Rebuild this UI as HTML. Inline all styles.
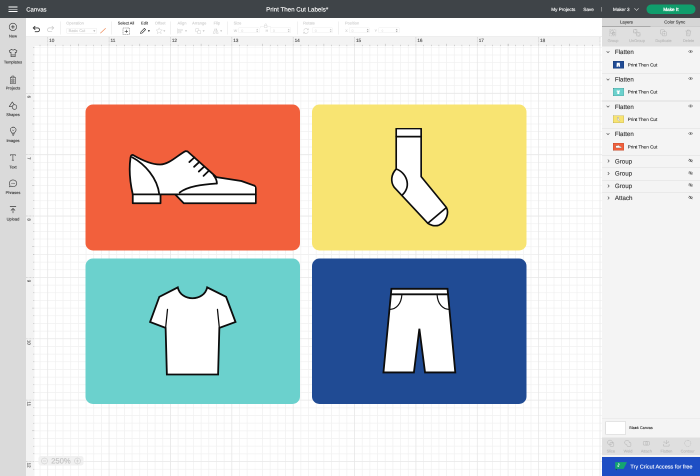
<!DOCTYPE html>
<html lang="en">
<head>
<meta charset="utf-8">
<title>Canvas - Print Then Cut Labels</title>
<style>
html,body{margin:0;padding:0;}
body{width:700px;height:476px;overflow:hidden;position:relative;background:#fff;font-family:"Liberation Sans", sans-serif;}
#app{position:absolute;left:0;top:0;width:1400px;height:952px;overflow:hidden;background:#fff;transform:scale(0.5);transform-origin:0 0;will-change:transform;}
#inner{position:absolute;left:0;top:0;width:700px;height:476px;zoom:2;}
#inner div,#inner span,#inner svg{position:absolute;display:block;}
#labels text{font-family:"Liberation Sans", sans-serif;text-rendering:geometricPrecision;white-space:pre;}
#canvas{left:26px;top:37px;width:576px;height:439px;background:#fff;}
</style>
</head>
<body>
<div id="app"><div id="inner">
<div id="canvas"></div>
<svg style="left:0;top:0" width="700" height="476" viewBox="0 0 700 476" fill="none"><path d="M40.03 46V476M55.37 46V476M63.04 46V476M70.71 46V476M78.39 46V476M86.06 46V476M93.73 46V476M101.40 46V476M116.74 46V476M124.41 46V476M132.08 46V476M139.75 46V476M147.43 46V476M155.10 46V476M162.77 46V476M178.11 46V476M185.78 46V476M193.45 46V476M201.12 46V476M208.80 46V476M216.47 46V476M224.14 46V476M239.48 46V476M247.15 46V476M254.82 46V476M262.50 46V476M270.17 46V476M277.84 46V476M285.51 46V476M300.85 46V476M308.52 46V476M316.19 46V476M323.86 46V476M331.54 46V476M339.21 46V476M346.88 46V476M362.22 46V476M369.89 46V476M377.56 46V476M385.23 46V476M392.91 46V476M400.58 46V476M408.25 46V476M423.59 46V476M431.26 46V476M438.93 46V476M446.60 46V476M454.28 46V476M461.95 46V476M469.62 46V476M484.96 46V476M492.63 46V476M500.30 46V476M507.97 46V476M515.65 46V476M523.32 46V476M530.99 46V476M546.33 46V476M554.00 46V476M561.67 46V476M569.35 46V476M577.02 46V476M584.69 46V476M592.36 46V476M34.3 47.27H602M34.3 54.94H602M34.3 62.61H602M34.3 70.29H602M34.3 77.96H602M34.3 85.63H602M34.3 100.97H602M34.3 108.64H602M34.3 116.31H602M34.3 123.98H602M34.3 131.66H602M34.3 139.33H602M34.3 147.00H602M34.3 162.34H602M34.3 170.01H602M34.3 177.68H602M34.3 185.35H602M34.3 193.03H602M34.3 200.70H602M34.3 208.37H602M34.3 223.71H602M34.3 231.38H602M34.3 239.05H602M34.3 246.72H602M34.3 254.40H602M34.3 262.07H602M34.3 269.74H602M34.3 285.08H602M34.3 292.75H602M34.3 300.42H602M34.3 308.09H602M34.3 315.77H602M34.3 323.44H602M34.3 331.11H602M34.3 346.45H602M34.3 354.12H602M34.3 361.79H602M34.3 369.46H602M34.3 377.14H602M34.3 384.81H602M34.3 392.48H602M34.3 407.82H602M34.3 415.49H602M34.3 423.16H602M34.3 430.83H602M34.3 438.51H602M34.3 446.18H602M34.3 453.85H602M34.3 469.19H602" stroke="#f1f1f1" stroke-width="0.75"/><path d="M47.70 46V476M109.07 46V476M170.44 46V476M231.81 46V476M293.18 46V476M354.55 46V476M415.92 46V476M477.29 46V476M538.66 46V476M600.03 46V476M34.3 93.30H602M34.3 154.67H602M34.3 216.04H602M34.3 277.41H602M34.3 338.78H602M34.3 400.15H602M34.3 461.52H602" stroke="#e7e7e7" stroke-width="0.8"/></svg>
<div style="left:85.5px;top:104.5px;width:214.5px;height:146.0px;background:#f2603c;border-radius:7.5px;"></div>
<div style="left:312px;top:104.5px;width:214.5px;height:146.0px;background:#f8e472;border-radius:7.5px;"></div>
<div style="left:85.5px;top:258.5px;width:214.5px;height:145.5px;background:#6bd1cd;border-radius:7.5px;"></div>
<div style="left:312px;top:258.5px;width:214.5px;height:145.5px;background:#204b94;border-radius:7.5px;"></div>
<div style="left:26px;top:37px;width:574.4px;height:8.8px;background:#f3f3f3;"></div>
<div style="left:26px;top:37px;width:8.4px;height:439px;background:#f3f3f3;"></div>
<svg style="left:0;top:0" width="700" height="476" viewBox="0 0 700 476"><line x1="40.0" y1="44.8" x2="40.0" y2="46" stroke="#b0b0b0" stroke-width="0.5"/><line x1="47.7" y1="37" x2="47.7" y2="46" stroke="#c4c4c4" stroke-width="0.7" stroke-dasharray="0.8 0.6"/><line x1="55.4" y1="44.8" x2="55.4" y2="46" stroke="#b0b0b0" stroke-width="0.5"/><line x1="63.0" y1="44.8" x2="63.0" y2="46" stroke="#b0b0b0" stroke-width="0.5"/><line x1="70.7" y1="44.8" x2="70.7" y2="46" stroke="#b0b0b0" stroke-width="0.5"/><line x1="78.4" y1="43.8" x2="78.4" y2="46" stroke="#b0b0b0" stroke-width="0.5"/><line x1="86.1" y1="44.8" x2="86.1" y2="46" stroke="#b0b0b0" stroke-width="0.5"/><line x1="93.7" y1="44.8" x2="93.7" y2="46" stroke="#b0b0b0" stroke-width="0.5"/><line x1="101.4" y1="44.8" x2="101.4" y2="46" stroke="#b0b0b0" stroke-width="0.5"/><line x1="109.1" y1="37" x2="109.1" y2="46" stroke="#c4c4c4" stroke-width="0.7" stroke-dasharray="0.8 0.6"/><line x1="116.7" y1="44.8" x2="116.7" y2="46" stroke="#b0b0b0" stroke-width="0.5"/><line x1="124.4" y1="44.8" x2="124.4" y2="46" stroke="#b0b0b0" stroke-width="0.5"/><line x1="132.1" y1="44.8" x2="132.1" y2="46" stroke="#b0b0b0" stroke-width="0.5"/><line x1="139.8" y1="43.8" x2="139.8" y2="46" stroke="#b0b0b0" stroke-width="0.5"/><line x1="147.4" y1="44.8" x2="147.4" y2="46" stroke="#b0b0b0" stroke-width="0.5"/><line x1="155.1" y1="44.8" x2="155.1" y2="46" stroke="#b0b0b0" stroke-width="0.5"/><line x1="162.8" y1="44.8" x2="162.8" y2="46" stroke="#b0b0b0" stroke-width="0.5"/><line x1="170.4" y1="37" x2="170.4" y2="46" stroke="#c4c4c4" stroke-width="0.7" stroke-dasharray="0.8 0.6"/><line x1="178.1" y1="44.8" x2="178.1" y2="46" stroke="#b0b0b0" stroke-width="0.5"/><line x1="185.8" y1="44.8" x2="185.8" y2="46" stroke="#b0b0b0" stroke-width="0.5"/><line x1="193.5" y1="44.8" x2="193.5" y2="46" stroke="#b0b0b0" stroke-width="0.5"/><line x1="201.1" y1="43.8" x2="201.1" y2="46" stroke="#b0b0b0" stroke-width="0.5"/><line x1="208.8" y1="44.8" x2="208.8" y2="46" stroke="#b0b0b0" stroke-width="0.5"/><line x1="216.5" y1="44.8" x2="216.5" y2="46" stroke="#b0b0b0" stroke-width="0.5"/><line x1="224.1" y1="44.8" x2="224.1" y2="46" stroke="#b0b0b0" stroke-width="0.5"/><line x1="231.8" y1="37" x2="231.8" y2="46" stroke="#c4c4c4" stroke-width="0.7" stroke-dasharray="0.8 0.6"/><line x1="239.5" y1="44.8" x2="239.5" y2="46" stroke="#b0b0b0" stroke-width="0.5"/><line x1="247.2" y1="44.8" x2="247.2" y2="46" stroke="#b0b0b0" stroke-width="0.5"/><line x1="254.8" y1="44.8" x2="254.8" y2="46" stroke="#b0b0b0" stroke-width="0.5"/><line x1="262.5" y1="43.8" x2="262.5" y2="46" stroke="#b0b0b0" stroke-width="0.5"/><line x1="270.2" y1="44.8" x2="270.2" y2="46" stroke="#b0b0b0" stroke-width="0.5"/><line x1="277.8" y1="44.8" x2="277.8" y2="46" stroke="#b0b0b0" stroke-width="0.5"/><line x1="285.5" y1="44.8" x2="285.5" y2="46" stroke="#b0b0b0" stroke-width="0.5"/><line x1="293.2" y1="37" x2="293.2" y2="46" stroke="#c4c4c4" stroke-width="0.7" stroke-dasharray="0.8 0.6"/><line x1="300.9" y1="44.8" x2="300.9" y2="46" stroke="#b0b0b0" stroke-width="0.5"/><line x1="308.5" y1="44.8" x2="308.5" y2="46" stroke="#b0b0b0" stroke-width="0.5"/><line x1="316.2" y1="44.8" x2="316.2" y2="46" stroke="#b0b0b0" stroke-width="0.5"/><line x1="323.9" y1="43.8" x2="323.9" y2="46" stroke="#b0b0b0" stroke-width="0.5"/><line x1="331.5" y1="44.8" x2="331.5" y2="46" stroke="#b0b0b0" stroke-width="0.5"/><line x1="339.2" y1="44.8" x2="339.2" y2="46" stroke="#b0b0b0" stroke-width="0.5"/><line x1="346.9" y1="44.8" x2="346.9" y2="46" stroke="#b0b0b0" stroke-width="0.5"/><line x1="354.5" y1="37" x2="354.5" y2="46" stroke="#c4c4c4" stroke-width="0.7" stroke-dasharray="0.8 0.6"/><line x1="362.2" y1="44.8" x2="362.2" y2="46" stroke="#b0b0b0" stroke-width="0.5"/><line x1="369.9" y1="44.8" x2="369.9" y2="46" stroke="#b0b0b0" stroke-width="0.5"/><line x1="377.6" y1="44.8" x2="377.6" y2="46" stroke="#b0b0b0" stroke-width="0.5"/><line x1="385.2" y1="43.8" x2="385.2" y2="46" stroke="#b0b0b0" stroke-width="0.5"/><line x1="392.9" y1="44.8" x2="392.9" y2="46" stroke="#b0b0b0" stroke-width="0.5"/><line x1="400.6" y1="44.8" x2="400.6" y2="46" stroke="#b0b0b0" stroke-width="0.5"/><line x1="408.2" y1="44.8" x2="408.2" y2="46" stroke="#b0b0b0" stroke-width="0.5"/><line x1="415.9" y1="37" x2="415.9" y2="46" stroke="#c4c4c4" stroke-width="0.7" stroke-dasharray="0.8 0.6"/><line x1="423.6" y1="44.8" x2="423.6" y2="46" stroke="#b0b0b0" stroke-width="0.5"/><line x1="431.3" y1="44.8" x2="431.3" y2="46" stroke="#b0b0b0" stroke-width="0.5"/><line x1="438.9" y1="44.8" x2="438.9" y2="46" stroke="#b0b0b0" stroke-width="0.5"/><line x1="446.6" y1="43.8" x2="446.6" y2="46" stroke="#b0b0b0" stroke-width="0.5"/><line x1="454.3" y1="44.8" x2="454.3" y2="46" stroke="#b0b0b0" stroke-width="0.5"/><line x1="461.9" y1="44.8" x2="461.9" y2="46" stroke="#b0b0b0" stroke-width="0.5"/><line x1="469.6" y1="44.8" x2="469.6" y2="46" stroke="#b0b0b0" stroke-width="0.5"/><line x1="477.3" y1="37" x2="477.3" y2="46" stroke="#c4c4c4" stroke-width="0.7" stroke-dasharray="0.8 0.6"/><line x1="485.0" y1="44.8" x2="485.0" y2="46" stroke="#b0b0b0" stroke-width="0.5"/><line x1="492.6" y1="44.8" x2="492.6" y2="46" stroke="#b0b0b0" stroke-width="0.5"/><line x1="500.3" y1="44.8" x2="500.3" y2="46" stroke="#b0b0b0" stroke-width="0.5"/><line x1="508.0" y1="43.8" x2="508.0" y2="46" stroke="#b0b0b0" stroke-width="0.5"/><line x1="515.6" y1="44.8" x2="515.6" y2="46" stroke="#b0b0b0" stroke-width="0.5"/><line x1="523.3" y1="44.8" x2="523.3" y2="46" stroke="#b0b0b0" stroke-width="0.5"/><line x1="531.0" y1="44.8" x2="531.0" y2="46" stroke="#b0b0b0" stroke-width="0.5"/><line x1="538.7" y1="37" x2="538.7" y2="46" stroke="#c4c4c4" stroke-width="0.7" stroke-dasharray="0.8 0.6"/><line x1="546.3" y1="44.8" x2="546.3" y2="46" stroke="#b0b0b0" stroke-width="0.5"/><line x1="554.0" y1="44.8" x2="554.0" y2="46" stroke="#b0b0b0" stroke-width="0.5"/><line x1="561.7" y1="44.8" x2="561.7" y2="46" stroke="#b0b0b0" stroke-width="0.5"/><line x1="569.3" y1="43.8" x2="569.3" y2="46" stroke="#b0b0b0" stroke-width="0.5"/><line x1="577.0" y1="44.8" x2="577.0" y2="46" stroke="#b0b0b0" stroke-width="0.5"/><line x1="584.7" y1="44.8" x2="584.7" y2="46" stroke="#b0b0b0" stroke-width="0.5"/><line x1="592.4" y1="44.8" x2="592.4" y2="46" stroke="#b0b0b0" stroke-width="0.5"/><line x1="600.0" y1="37" x2="600.0" y2="46" stroke="#c4c4c4" stroke-width="0.7" stroke-dasharray="0.8 0.6"/><line x1="33.099999999999994" y1="47.3" x2="34.3" y2="47.3" stroke="#b0b0b0" stroke-width="0.5"/><line x1="33.099999999999994" y1="54.9" x2="34.3" y2="54.9" stroke="#b0b0b0" stroke-width="0.5"/><line x1="32.099999999999994" y1="62.6" x2="34.3" y2="62.6" stroke="#b0b0b0" stroke-width="0.5"/><line x1="33.099999999999994" y1="70.3" x2="34.3" y2="70.3" stroke="#b0b0b0" stroke-width="0.5"/><line x1="33.099999999999994" y1="78.0" x2="34.3" y2="78.0" stroke="#b0b0b0" stroke-width="0.5"/><line x1="33.099999999999994" y1="85.6" x2="34.3" y2="85.6" stroke="#b0b0b0" stroke-width="0.5"/><line x1="26" y1="93.3" x2="34.3" y2="93.3" stroke="#c4c4c4" stroke-width="0.7" stroke-dasharray="0.8 0.6"/><line x1="33.099999999999994" y1="101.0" x2="34.3" y2="101.0" stroke="#b0b0b0" stroke-width="0.5"/><line x1="33.099999999999994" y1="108.6" x2="34.3" y2="108.6" stroke="#b0b0b0" stroke-width="0.5"/><line x1="33.099999999999994" y1="116.3" x2="34.3" y2="116.3" stroke="#b0b0b0" stroke-width="0.5"/><line x1="32.099999999999994" y1="124.0" x2="34.3" y2="124.0" stroke="#b0b0b0" stroke-width="0.5"/><line x1="33.099999999999994" y1="131.7" x2="34.3" y2="131.7" stroke="#b0b0b0" stroke-width="0.5"/><line x1="33.099999999999994" y1="139.3" x2="34.3" y2="139.3" stroke="#b0b0b0" stroke-width="0.5"/><line x1="33.099999999999994" y1="147.0" x2="34.3" y2="147.0" stroke="#b0b0b0" stroke-width="0.5"/><line x1="26" y1="154.7" x2="34.3" y2="154.7" stroke="#c4c4c4" stroke-width="0.7" stroke-dasharray="0.8 0.6"/><line x1="33.099999999999994" y1="162.3" x2="34.3" y2="162.3" stroke="#b0b0b0" stroke-width="0.5"/><line x1="33.099999999999994" y1="170.0" x2="34.3" y2="170.0" stroke="#b0b0b0" stroke-width="0.5"/><line x1="33.099999999999994" y1="177.7" x2="34.3" y2="177.7" stroke="#b0b0b0" stroke-width="0.5"/><line x1="32.099999999999994" y1="185.4" x2="34.3" y2="185.4" stroke="#b0b0b0" stroke-width="0.5"/><line x1="33.099999999999994" y1="193.0" x2="34.3" y2="193.0" stroke="#b0b0b0" stroke-width="0.5"/><line x1="33.099999999999994" y1="200.7" x2="34.3" y2="200.7" stroke="#b0b0b0" stroke-width="0.5"/><line x1="33.099999999999994" y1="208.4" x2="34.3" y2="208.4" stroke="#b0b0b0" stroke-width="0.5"/><line x1="26" y1="216.0" x2="34.3" y2="216.0" stroke="#c4c4c4" stroke-width="0.7" stroke-dasharray="0.8 0.6"/><line x1="33.099999999999994" y1="223.7" x2="34.3" y2="223.7" stroke="#b0b0b0" stroke-width="0.5"/><line x1="33.099999999999994" y1="231.4" x2="34.3" y2="231.4" stroke="#b0b0b0" stroke-width="0.5"/><line x1="33.099999999999994" y1="239.1" x2="34.3" y2="239.1" stroke="#b0b0b0" stroke-width="0.5"/><line x1="32.099999999999994" y1="246.7" x2="34.3" y2="246.7" stroke="#b0b0b0" stroke-width="0.5"/><line x1="33.099999999999994" y1="254.4" x2="34.3" y2="254.4" stroke="#b0b0b0" stroke-width="0.5"/><line x1="33.099999999999994" y1="262.1" x2="34.3" y2="262.1" stroke="#b0b0b0" stroke-width="0.5"/><line x1="33.099999999999994" y1="269.7" x2="34.3" y2="269.7" stroke="#b0b0b0" stroke-width="0.5"/><line x1="26" y1="277.4" x2="34.3" y2="277.4" stroke="#c4c4c4" stroke-width="0.7" stroke-dasharray="0.8 0.6"/><line x1="33.099999999999994" y1="285.1" x2="34.3" y2="285.1" stroke="#b0b0b0" stroke-width="0.5"/><line x1="33.099999999999994" y1="292.8" x2="34.3" y2="292.8" stroke="#b0b0b0" stroke-width="0.5"/><line x1="33.099999999999994" y1="300.4" x2="34.3" y2="300.4" stroke="#b0b0b0" stroke-width="0.5"/><line x1="32.099999999999994" y1="308.1" x2="34.3" y2="308.1" stroke="#b0b0b0" stroke-width="0.5"/><line x1="33.099999999999994" y1="315.8" x2="34.3" y2="315.8" stroke="#b0b0b0" stroke-width="0.5"/><line x1="33.099999999999994" y1="323.4" x2="34.3" y2="323.4" stroke="#b0b0b0" stroke-width="0.5"/><line x1="33.099999999999994" y1="331.1" x2="34.3" y2="331.1" stroke="#b0b0b0" stroke-width="0.5"/><line x1="26" y1="338.8" x2="34.3" y2="338.8" stroke="#c4c4c4" stroke-width="0.7" stroke-dasharray="0.8 0.6"/><line x1="33.099999999999994" y1="346.5" x2="34.3" y2="346.5" stroke="#b0b0b0" stroke-width="0.5"/><line x1="33.099999999999994" y1="354.1" x2="34.3" y2="354.1" stroke="#b0b0b0" stroke-width="0.5"/><line x1="33.099999999999994" y1="361.8" x2="34.3" y2="361.8" stroke="#b0b0b0" stroke-width="0.5"/><line x1="32.099999999999994" y1="369.5" x2="34.3" y2="369.5" stroke="#b0b0b0" stroke-width="0.5"/><line x1="33.099999999999994" y1="377.1" x2="34.3" y2="377.1" stroke="#b0b0b0" stroke-width="0.5"/><line x1="33.099999999999994" y1="384.8" x2="34.3" y2="384.8" stroke="#b0b0b0" stroke-width="0.5"/><line x1="33.099999999999994" y1="392.5" x2="34.3" y2="392.5" stroke="#b0b0b0" stroke-width="0.5"/><line x1="26" y1="400.1" x2="34.3" y2="400.1" stroke="#c4c4c4" stroke-width="0.7" stroke-dasharray="0.8 0.6"/><line x1="33.099999999999994" y1="407.8" x2="34.3" y2="407.8" stroke="#b0b0b0" stroke-width="0.5"/><line x1="33.099999999999994" y1="415.5" x2="34.3" y2="415.5" stroke="#b0b0b0" stroke-width="0.5"/><line x1="33.099999999999994" y1="423.2" x2="34.3" y2="423.2" stroke="#b0b0b0" stroke-width="0.5"/><line x1="32.099999999999994" y1="430.8" x2="34.3" y2="430.8" stroke="#b0b0b0" stroke-width="0.5"/><line x1="33.099999999999994" y1="438.5" x2="34.3" y2="438.5" stroke="#b0b0b0" stroke-width="0.5"/><line x1="33.099999999999994" y1="446.2" x2="34.3" y2="446.2" stroke="#b0b0b0" stroke-width="0.5"/><line x1="33.099999999999994" y1="453.8" x2="34.3" y2="453.8" stroke="#b0b0b0" stroke-width="0.5"/><line x1="26" y1="461.5" x2="34.3" y2="461.5" stroke="#c4c4c4" stroke-width="0.7" stroke-dasharray="0.8 0.6"/><line x1="33.099999999999994" y1="469.2" x2="34.3" y2="469.2" stroke="#b0b0b0" stroke-width="0.5"/></svg>
<div style="left:0px;top:0px;width:700px;height:18.2px;background:#3f4448;"></div>
<div style="left:8.6px;top:6.6px;width:9px;height:0.9px;background:#ffffff;"></div>
<div style="left:8.6px;top:8.8px;width:9px;height:0.9px;background:#ffffff;"></div>
<div style="left:8.6px;top:11.0px;width:9px;height:0.9px;background:#ffffff;"></div>
<div style="left:601.2px;top:7px;width:0.5px;height:4.6px;background:#c8c8c8;"></div>
<svg style="left:633.5px;top:7.6px" width="6" height="4" viewBox="0 0 6 4"><path d="M0.8 0.8 L3 3 L5.2 0.8" fill="none" stroke="#d8d8d8" stroke-width="0.6"/></svg>
<div style="left:646.3px;top:4.5px;width:49.2px;height:9.3px;background:#109d6c;border-radius:4.7px;"></div>
<div style="left:26px;top:18px;width:576px;height:19px;background:#ffffff;"></div>
<div style="left:26px;top:36.7px;width:576px;height:0.5px;background:#dcdcdc;"></div>
<div style="left:60.3px;top:21.7px;width:0.5px;height:12.6px;background:#e2e2e2;"></div>
<div style="left:111.7px;top:21.7px;width:0.5px;height:12.6px;background:#e2e2e2;"></div>
<div style="left:170.7px;top:21.7px;width:0.5px;height:12.6px;background:#e2e2e2;"></div>
<div style="left:227.4px;top:21.7px;width:0.5px;height:12.6px;background:#e2e2e2;"></div>
<div style="left:296.8px;top:21.7px;width:0.5px;height:12.6px;background:#e2e2e2;"></div>
<div style="left:338.6px;top:21.7px;width:0.5px;height:12.6px;background:#e2e2e2;"></div>
<svg style="left:32px;top:25.5px" width="9" height="8" viewBox="0 0 9 8"><path d="M3 0.8 L1.2 2.4 L3 4 M1.4 2.4 H5.6 A1.9 1.9 0 0 1 5.6 6.2 H3.2" fill="none" stroke="#3a3a3a" stroke-width="0.9" stroke-linecap="round" stroke-linejoin="round"/></svg>
<svg style="left:46px;top:25.5px" width="9" height="8" viewBox="0 0 9 8"><path d="M6 0.8 L7.8 2.4 L6 4 M7.6 2.4 H3.4 A1.9 1.9 0 0 0 3.4 6.2 H5.8" fill="none" stroke="#c9c9c9" stroke-width="0.7" stroke-linecap="round" stroke-linejoin="round"/></svg>
<div style="left:66.7px;top:28.1px;width:30.3px;height:5.3px;background:#fff;border:0.5px solid #ebebeb;box-sizing:border-box;border-radius:0.6px;"></div>
<svg style="left:99.5px;top:27.5px" width="7" height="7" viewBox="0 0 7 7"><path d="M0.8 5.8 L6.2 0.8" stroke="#f08c5a" stroke-width="0.7"/><path d="M0.8 6.2 L1.6 5.6" stroke="#ddd" stroke-width="0.5"/></svg>
<svg style="left:122.3px;top:27.4px" width="7.6" height="7.6" viewBox="0 0 7.6 7.6"><rect x="0.5" y="0.5" width="6.6" height="6.6" fill="none" stroke="#666" stroke-width="0.5" stroke-dasharray="1.1 0.55"/><path d="M3.8 2.2 V5.4 M2.2 3.8 H5.4" stroke="#333" stroke-width="0.6"/></svg>
<svg style="left:139.6px;top:27.4px" width="7" height="7" viewBox="0 0 7 7"><path d="M1 6 L1.5 4.3 L4.9 0.9 L6.1 2.1 L2.7 5.5 Z" fill="none" stroke="#333" stroke-width="0.65" stroke-linejoin="round"/></svg>
<svg style="left:155.4px;top:27.2px" width="7.4" height="7.4" viewBox="0 0 7.4 7.4"><path d="M3.7 0.8 L4.6 2.8 L6.8 3 L5.1 4.4 L5.7 6.6 L3.7 5.4 L1.7 6.6 L2.3 4.4 L0.6 3 L2.8 2.8 Z" fill="none" stroke="#d4d4d4" stroke-width="0.5" stroke-linejoin="round"/></svg>
<svg style="left:177.2px;top:28px" width="6" height="6" viewBox="0 0 6 6"><path d="M0.6 0.4 V5.6" stroke="#d0d0d0" stroke-width="0.5"/><rect x="1.6" y="1.2" width="3.6" height="1.4" fill="none" stroke="#d0d0d0" stroke-width="0.45"/><rect x="1.6" y="3.5" width="2.4" height="1.4" fill="none" stroke="#d0d0d0" stroke-width="0.45"/></svg>
<svg style="left:194.8px;top:27.8px" width="6.4" height="6.4" viewBox="0 0 6.4 6.4"><rect x="0.6" y="0.6" width="3.2" height="3.2" rx="0.4" fill="none" stroke="#d0d0d0" stroke-width="0.5"/><rect x="2.6" y="2.6" width="3.2" height="3.2" rx="0.4" fill="#fff" stroke="#d0d0d0" stroke-width="0.5"/></svg>
<svg style="left:212.6px;top:27.6px" width="6.4" height="6.6" viewBox="0 0 6.4 6.6"><path d="M2.6 1 L0.6 5.8 H2.6 Z M3.8 1 L5.8 5.8 H3.8 Z" fill="none" stroke="#d0d0d0" stroke-width="0.5" stroke-linejoin="round"/></svg>
<div style="left:238.6px;top:27.7px;width:20.7px;height:5.4px;background:#fff;border:0.5px solid #efefef;box-sizing:border-box;border-radius:0.6px;"></div>
<svg style="left:256.2px;top:28.6px" width="2.4" height="4" viewBox="0 0 2.4 4"><path d="M0.2 1.6 L1.2 0.3 L2.2 1.6 Z M0.2 2.4 L1.2 3.7 L2.2 2.4 Z" fill="#c4c4c4"/></svg>
<svg style="left:260px;top:23px" width="11" height="6" viewBox="0 0 11 6"><path d="M0.3 5 V3.6 H4.2 M10.7 5 V3.6 H7" fill="none" stroke="#e4e4e4" stroke-width="0.4"/><rect x="4.4" y="2.2" width="2.6" height="2.4" fill="#fff" stroke="#d5d5d5" stroke-width="0.45"/><path d="M4.9 2.2 V1.5 A0.8 0.8 0 0 1 6.5 1.5 V2.2" fill="none" stroke="#d5d5d5" stroke-width="0.45"/></svg>
<div style="left:270.3px;top:27.7px;width:20.7px;height:5.4px;background:#fff;border:0.5px solid #efefef;box-sizing:border-box;border-radius:0.6px;"></div>
<svg style="left:287.7px;top:28.6px" width="2.4" height="4" viewBox="0 0 2.4 4"><path d="M0.2 1.6 L1.2 0.3 L2.2 1.6 Z M0.2 2.4 L1.2 3.7 L2.2 2.4 Z" fill="#c4c4c4"/></svg>
<svg style="left:302.6px;top:27.4px" width="7" height="7" viewBox="0 0 7 7"><path d="M1.2 3 A2.4 2.4 0 0 1 5.6 2.2 M5.8 4 A2.4 2.4 0 0 1 1.4 4.8" fill="none" stroke="#cfcfcf" stroke-width="0.55"/><path d="M5.9 0.9 V2.4 H4.4 M1.1 6.1 V4.6 H2.6" fill="none" stroke="#cfcfcf" stroke-width="0.55"/></svg>
<div style="left:312.1px;top:27.7px;width:20.5px;height:5.4px;background:#fff;border:0.5px solid #efefef;box-sizing:border-box;border-radius:0.6px;"></div>
<svg style="left:329.5px;top:28.6px" width="2.4" height="4" viewBox="0 0 2.4 4"><path d="M0.2 1.6 L1.2 0.3 L2.2 1.6 Z M0.2 2.4 L1.2 3.7 L2.2 2.4 Z" fill="#c4c4c4"/></svg>
<div style="left:348.9px;top:27.7px;width:20.4px;height:5.4px;background:#fff;border:0.5px solid #efefef;box-sizing:border-box;border-radius:0.6px;"></div>
<svg style="left:366.40000000000003px;top:28.6px" width="2.4" height="4" viewBox="0 0 2.4 4"><path d="M0.2 1.6 L1.2 0.3 L2.2 1.6 Z M0.2 2.4 L1.2 3.7 L2.2 2.4 Z" fill="#a8a8a8"/></svg>
<div style="left:378.6px;top:27.7px;width:20.7px;height:5.4px;background:#fff;border:0.5px solid #efefef;box-sizing:border-box;border-radius:0.6px;"></div>
<svg style="left:395.5px;top:28.6px" width="2.4" height="4" viewBox="0 0 2.4 4"><path d="M0.2 1.6 L1.2 0.3 L2.2 1.6 Z M0.2 2.4 L1.2 3.7 L2.2 2.4 Z" fill="#a8a8a8"/></svg>
<div style="left:0px;top:18px;width:26px;height:458px;background:#dadada;"></div>
<svg style="left:8.6px;top:22.7px" width="8.8" height="8.8" viewBox="0 0 8.8 8.8"><circle cx="4.4" cy="4.4" r="3.7" fill="none" stroke="#3a3a3a" stroke-width="0.6"/><path d="M4.4 2.6 V6.2 M2.6 4.4 H6.2" stroke="#3a3a3a" stroke-width="0.8"/></svg>
<svg style="left:8.4px;top:48.6px" width="9.2" height="9" viewBox="0 0 9.2 9"><path d="M3.2 0.8 L0.7 2.2 L1.5 4.1 L2.5 3.7 V8.2 H6.7 V3.7 L7.7 4.1 L8.5 2.2 L6 0.8 A1.5 1.2 0 0 1 3.2 0.8 Z M2.5 6.4 H6.7" fill="none" stroke="#3a3a3a" stroke-width="0.6" stroke-linejoin="round"/></svg>
<svg style="left:9.6px;top:75.4px" width="6.8" height="8.8" viewBox="0 0 7.6 9.4" preserveAspectRatio="none"><rect x="0.9" y="1.8" width="5.8" height="7" rx="0.6" fill="none" stroke="#3a3a3a" stroke-width="0.6"/><rect x="2.6" y="0.6" width="2.4" height="2" rx="0.4" fill="#dadada" stroke="#3a3a3a" stroke-width="0.55"/><rect x="2.5" y="4" width="2.6" height="1.2" fill="none" stroke="#3a3a3a" stroke-width="0.45"/><rect x="2.5" y="6.2" width="2.6" height="1.2" fill="none" stroke="#3a3a3a" stroke-width="0.45"/></svg>
<svg style="left:8.4px;top:101.2px" width="9.2" height="9.2" viewBox="0 0 9.2 9.2"><path d="M3.8 0.9 L7 5.6 H0.7 Z" fill="none" stroke="#3a3a3a" stroke-width="0.6" stroke-linejoin="round"/><circle cx="6" cy="6" r="2.3" fill="#dadada" stroke="#3a3a3a" stroke-width="0.6"/></svg>
<svg style="left:8.8px;top:126.4px" width="8.4" height="9.6" viewBox="0 0 8.4 9.6"><path d="M2.8 6.6 C2.8 5.4 1.3 4.9 1.3 3.4 A2.9 2.9 0 0 1 7.1 3.4 C7.1 4.9 5.6 5.4 5.6 6.6 Z" fill="none" stroke="#3a3a3a" stroke-width="0.6" stroke-linejoin="round"/><path d="M3 7.6 H5.4 M3.4 8.7 H5" stroke="#3a3a3a" stroke-width="0.6"/><path d="M3.2 3.2 L4.2 4.4 L5.2 3.2" fill="none" stroke="#3a3a3a" stroke-width="0.45"/></svg>
<svg style="left:9.6px;top:154.2px" width="6.8" height="7" viewBox="0 0 7.6 8"><path d="M0.9 2.2 V0.9 H6.7 V2.2 M3.8 0.9 V7 M2.6 7.1 H5" fill="none" stroke="#3a3a3a" stroke-width="0.65"/></svg>
<svg style="left:8.4px;top:179.2px" width="9.2" height="9.2" viewBox="0 0 9.2 9.2"><path d="M4.6 0.9 A3.6 3.4 0 1 1 2.6 7.1 L1 7.9 L1.5 6.2 A3.6 3.4 0 0 1 4.6 0.9 Z" fill="none" stroke="#3a3a3a" stroke-width="0.6" stroke-linejoin="round"/><path d="M2.8 5 C3.4 4 4.2 4 4.6 4.6 C5 4 5.8 4 6.4 5" fill="none" stroke="#3a3a3a" stroke-width="0.5"/></svg>
<svg style="left:9px;top:205.6px" width="8" height="8.4" viewBox="0 0 8 8.4"><path d="M0.9 1 H7.1 M4 7.6 V3 M1.9 5 L4 2.9 L6.1 5" fill="none" stroke="#3a3a3a" stroke-width="0.65"/></svg>
<div style="left:38.7px;top:455.8px;width:44.7px;height:9.8px;background:rgba(238,238,238,0.85);border-radius:2.5px;"></div>
<svg style="left:40.8px;top:457.4px" width="7" height="7" viewBox="0 0 7 7"><circle cx="3.5" cy="3.5" r="3" fill="none" stroke="#c6c6c6" stroke-width="0.5"/><path d="M2 3.5 H5" stroke="#c6c6c6" stroke-width="0.55"/></svg>
<svg style="left:74.2px;top:457.4px" width="7" height="7" viewBox="0 0 7 7"><circle cx="3.5" cy="3.5" r="3" fill="none" stroke="#c6c6c6" stroke-width="0.5"/><path d="M2 3.5 H5 M3.5 2 V5" stroke="#c6c6c6" stroke-width="0.55"/></svg>
<div style="left:602px;top:18px;width:98px;height:458px;background:#f4f4f4;"></div>
<div style="left:602px;top:18px;width:98px;height:9px;background:#d6d6d6;"></div>
<div style="left:602px;top:25.9px;width:48.5px;height:1px;background:#a9a9a9;"></div>
<div style="left:650.5px;top:26.4px;width:49.5px;height:0.5px;background:#c4c4c4;"></div>
<div style="left:602px;top:27px;width:98px;height:19.4px;background:#dfdfdf;"></div>
<svg style="left:609.2px;top:29.2px" width="7.6" height="7.6" viewBox="0 0 7.6 7.6"><rect x="0.7" y="0.7" width="6.2" height="6.2" fill="none" stroke="#b2b2b2" stroke-width="0.45" stroke-dasharray="1.2 0.8"/><rect x="1.8" y="1.8" width="2.6" height="2.6" fill="none" stroke="#b2b2b2" stroke-width="0.5"/><rect x="3.3" y="3.3" width="2.6" height="2.6" fill="none" stroke="#b2b2b2" stroke-width="0.5"/></svg>
<svg style="left:633.2px;top:29.2px" width="7.6" height="7.6" viewBox="0 0 7.6 7.6"><rect x="0.7" y="0.7" width="3.2" height="3.2" fill="none" stroke="#b2b2b2" stroke-width="0.5"/><rect x="3.8" y="3.8" width="3.2" height="3.2" fill="none" stroke="#b2b2b2" stroke-width="0.5"/><path d="M2.3 0.2 V1.2 M2.3 3.4 V4.4 M0.2 2.3 H1.2 M3.4 2.3 H4.4 M5.4 3.3 V4.3 M5.4 6.5 V7.5 M3.3 5.4 H4.3 M6.5 5.4 H7.5" stroke="#b2b2b2" stroke-width="0.45"/></svg>
<svg style="left:659.7px;top:29.2px" width="7.6" height="7.6" viewBox="0 0 7.6 7.6"><rect x="0.8" y="0.8" width="4.2" height="4.2" rx="0.7" fill="none" stroke="#b2b2b2" stroke-width="0.5"/><rect x="2.7" y="2.7" width="4.2" height="4.2" rx="0.7" fill="#dfdfdf" stroke="#b2b2b2" stroke-width="0.5"/><path d="M4.8 3.8 V5.8 M3.8 4.8 H5.8" stroke="#b2b2b2" stroke-width="0.45"/></svg>
<svg style="left:684.7px;top:29.2px" width="7.6" height="7.6" viewBox="0 0 7.6 7.6"><path d="M0.9 2 H6.7 M2.8 2 V1 H4.8 V2 M1.7 2.2 L2.2 6.9 H5.4 L5.9 2.2" fill="none" stroke="#b2b2b2" stroke-width="0.5" stroke-linejoin="round"/><path d="M3.2 3.4 V5.6 M4.4 3.4 V5.6" stroke="#b2b2b2" stroke-width="0.4"/></svg>
<svg style="left:606.2px;top:50.6px" width="4" height="3" viewBox="0 0 4 3"><path d="M0.6 0.7 L2 2.2 L3.4 0.7" fill="none" stroke="#444" stroke-width="0.55"/></svg>
<svg style="left:687.8px;top:49.4px" width="5.2" height="4" viewBox="0 0 5.2 4"><path d="M0.4 2 C1.4 0.5 3.8 0.5 4.8 2 C3.8 3.5 1.4 3.5 0.4 2 Z" fill="none" stroke="#666" stroke-width="0.5"/><circle cx="2.6" cy="2" r="0.8" fill="#666"/></svg>
<div style="left:612.8px;top:60.900000000000006px;width:11.4px;height:7.6px;background:#204b94;border:0.4px dotted rgba(0,0,0,0.35);box-sizing:border-box;"></div>
<svg style="left:616.7px;top:62.5px" width="3.6" height="4.4" viewBox="0 0 3.6 4.4"><path d="M0.3 0.2 H3.3 L3.6 4.2 H2.1 L1.8 2 L1.5 4.2 H0 Z" fill="#fff"/></svg>
<div style="left:602px;top:73.4px;width:98px;height:0.6px;background:#dddddd;"></div>
<svg style="left:606.2px;top:77.89999999999999px" width="4" height="3" viewBox="0 0 4 3"><path d="M0.6 0.7 L2 2.2 L3.4 0.7" fill="none" stroke="#444" stroke-width="0.55"/></svg>
<svg style="left:687.8px;top:76.7px" width="5.2" height="4" viewBox="0 0 5.2 4"><path d="M0.4 2 C1.4 0.5 3.8 0.5 4.8 2 C3.8 3.5 1.4 3.5 0.4 2 Z" fill="none" stroke="#666" stroke-width="0.5"/><circle cx="2.6" cy="2" r="0.8" fill="#666"/></svg>
<div style="left:612.8px;top:88.2px;width:11.4px;height:7.6px;background:#6bd1cd;border:0.4px dotted rgba(0,0,0,0.35);box-sizing:border-box;"></div>
<svg style="left:616.7px;top:89.8px" width="3.6" height="4.4" viewBox="0 0 3.6 4.4"><path d="M0.9 0.2 C1.2 0.8 2.4 0.8 2.7 0.2 L3.6 0.7 L3.3 1.7 L2.8 1.5 V4.2 H0.8 V1.5 L0.3 1.7 L0 0.7 Z" fill="#fff"/></svg>
<div style="left:602px;top:100.69999999999999px;width:98px;height:0.6px;background:#dddddd;"></div>
<svg style="left:606.2px;top:105.19999999999999px" width="4" height="3" viewBox="0 0 4 3"><path d="M0.6 0.7 L2 2.2 L3.4 0.7" fill="none" stroke="#444" stroke-width="0.55"/></svg>
<svg style="left:687.8px;top:104.0px" width="5.2" height="4" viewBox="0 0 5.2 4"><path d="M0.4 2 C1.4 0.5 3.8 0.5 4.8 2 C3.8 3.5 1.4 3.5 0.4 2 Z" fill="none" stroke="#666" stroke-width="0.5"/><circle cx="2.6" cy="2" r="0.8" fill="#666"/></svg>
<div style="left:612.8px;top:115.5px;width:11.4px;height:7.6px;background:#f8e472;border:0.4px dotted rgba(0,0,0,0.35);box-sizing:border-box;"></div>
<svg style="left:616.7px;top:117.1px" width="3.6" height="4.4" viewBox="0 0 3.6 4.4"><path d="M1 0 H2.2 V2.2 L3.4 3.6 C3.5 4 3 4.4 2.6 4.2 L0.9 2.6 C0.7 2.3 0.8 2 1 1.8 Z" fill="#fff" stroke="#555" stroke-width="0.25"/></svg>
<div style="left:602px;top:128.0px;width:98px;height:0.6px;background:#dddddd;"></div>
<svg style="left:606.2px;top:132.5px" width="4" height="3" viewBox="0 0 4 3"><path d="M0.6 0.7 L2 2.2 L3.4 0.7" fill="none" stroke="#444" stroke-width="0.55"/></svg>
<svg style="left:687.8px;top:131.3px" width="5.2" height="4" viewBox="0 0 5.2 4"><path d="M0.4 2 C1.4 0.5 3.8 0.5 4.8 2 C3.8 3.5 1.4 3.5 0.4 2 Z" fill="none" stroke="#666" stroke-width="0.5"/><circle cx="2.6" cy="2" r="0.8" fill="#666"/></svg>
<div style="left:612.8px;top:142.79999999999998px;width:11.4px;height:7.6px;background:#f2603c;border:0.4px dotted rgba(0,0,0,0.35);box-sizing:border-box;"></div>
<svg style="left:615.4px;top:144.4px" width="6.2" height="4.4" viewBox="0 0 6.2 4.4"><path d="M0.2 0.9 C1.2 1.5 2 1.3 2.8 0.6 L4.2 1.8 L6 2.3 V3.4 H0.4 Z" fill="#fff" stroke="#444" stroke-width="0.25"/></svg>
<div style="left:602px;top:155.3px;width:98px;height:0.6px;background:#dddddd;"></div>
<svg style="left:607.0px;top:159.2px" width="3" height="4" viewBox="0 0 3 4"><path d="M0.8 0.6 L2.2 2 L0.8 3.4" fill="none" stroke="#444" stroke-width="0.55"/></svg>
<svg style="left:687.8px;top:158.6px" width="5.2" height="4" viewBox="0 0 5.2 4"><path d="M0.4 2 C1.4 0.5 3.8 0.5 4.8 2 C3.8 3.5 1.4 3.5 0.4 2 Z" fill="none" stroke="#666" stroke-width="0.5"/><circle cx="2.6" cy="2" r="0.8" fill="#666"/><path d="M0.9 0.3 L4.3 3.7" stroke="#555" stroke-width="0.55"/></svg>
<div style="left:602px;top:167.5px;width:98px;height:0.6px;background:#dddddd;"></div>
<svg style="left:607.0px;top:171.5px" width="3" height="4" viewBox="0 0 3 4"><path d="M0.8 0.6 L2.2 2 L0.8 3.4" fill="none" stroke="#444" stroke-width="0.55"/></svg>
<svg style="left:687.8px;top:170.9px" width="5.2" height="4" viewBox="0 0 5.2 4"><path d="M0.4 2 C1.4 0.5 3.8 0.5 4.8 2 C3.8 3.5 1.4 3.5 0.4 2 Z" fill="none" stroke="#666" stroke-width="0.5"/><circle cx="2.6" cy="2" r="0.8" fill="#666"/><path d="M0.9 0.3 L4.3 3.7" stroke="#555" stroke-width="0.55"/></svg>
<div style="left:602px;top:179.8px;width:98px;height:0.6px;background:#dddddd;"></div>
<svg style="left:607.0px;top:183.8px" width="3" height="4" viewBox="0 0 3 4"><path d="M0.8 0.6 L2.2 2 L0.8 3.4" fill="none" stroke="#444" stroke-width="0.55"/></svg>
<svg style="left:687.8px;top:183.20000000000002px" width="5.2" height="4" viewBox="0 0 5.2 4"><path d="M0.4 2 C1.4 0.5 3.8 0.5 4.8 2 C3.8 3.5 1.4 3.5 0.4 2 Z" fill="none" stroke="#666" stroke-width="0.5"/><circle cx="2.6" cy="2" r="0.8" fill="#666"/><path d="M0.9 0.3 L4.3 3.7" stroke="#555" stroke-width="0.55"/></svg>
<div style="left:602px;top:192.10000000000002px;width:98px;height:0.6px;background:#dddddd;"></div>
<svg style="left:607.0px;top:196px" width="3" height="4" viewBox="0 0 3 4"><path d="M0.8 0.6 L2.2 2 L0.8 3.4" fill="none" stroke="#444" stroke-width="0.55"/></svg>
<svg style="left:687.8px;top:195.4px" width="5.2" height="4" viewBox="0 0 5.2 4"><path d="M0.4 2 C1.4 0.5 3.8 0.5 4.8 2 C3.8 3.5 1.4 3.5 0.4 2 Z" fill="none" stroke="#666" stroke-width="0.5"/><circle cx="2.6" cy="2" r="0.8" fill="#666"/><path d="M0.9 0.3 L4.3 3.7" stroke="#555" stroke-width="0.55"/></svg>
<div style="left:602px;top:418.6px;width:98px;height:0.5px;background:#e4e4e4;"></div>
<div style="left:605.5px;top:421px;width:20.3px;height:14px;background:#fff;border:0.5px solid #c9c9c9;box-sizing:border-box;border-radius:0.8px;"></div>
<div style="left:602px;top:437.6px;width:98px;height:17.6px;background:#dfdfdf;"></div>
<svg style="left:607.0px;top:439.6px" width="7.6" height="7.6" viewBox="0 0 7.6 7.6"><circle cx="3" cy="3" r="2.4" fill="none" stroke="#b2b2b2" stroke-width="0.5"/><rect x="3" y="3" width="3.8" height="3.8" rx="0.6" fill="none" stroke="#b2b2b2" stroke-width="0.5"/></svg>
<svg style="left:624.2px;top:439.6px" width="7.6" height="7.6" viewBox="0 0 7.6 7.6"><path d="M3 0.7 A2.3 2.3 0 0 1 5.3 3 H6.2 A0.7 0.7 0 0 1 6.9 3.7 V6.2 A0.7 0.7 0 0 1 6.2 6.9 H3.7 A0.7 0.7 0 0 1 3 6.2 V5.3 A2.3 2.3 0 0 1 3 0.7 Z" fill="none" stroke="#b2b2b2" stroke-width="0.5"/></svg>
<svg style="left:642.6px;top:439.6px" width="7.6" height="7.6" viewBox="0 0 7.6 7.6"><rect x="0.7" y="2" width="4" height="3.6" rx="0.6" fill="none" stroke="#b2b2b2" stroke-width="0.5"/><rect x="3.4" y="2" width="3.5" height="3.6" rx="0.6" fill="none" stroke="#b2b2b2" stroke-width="0.5"/></svg>
<svg style="left:662.6px;top:439.6px" width="7.6" height="7.6" viewBox="0 0 7.6 7.6"><path d="M1 4.6 V6.6 H6.6 V4.6 M3.8 0.6 V4.2 M2.4 2.8 L3.8 4.3 L5.2 2.8" fill="none" stroke="#b2b2b2" stroke-width="0.5"/><path d="M2.2 1.6 L1 2.6 L2.4 3.6 M5.4 1.6 L6.6 2.6 L5.2 3.6" fill="none" stroke="#b2b2b2" stroke-width="0.4"/></svg>
<svg style="left:683.8000000000001px;top:439.6px" width="7.6" height="7.6" viewBox="0 0 7.6 7.6"><path d="M3.8 0.7 A3.1 3.1 0 1 1 3.79 0.7 Z" fill="none" stroke="#b2b2b2" stroke-width="0.5" stroke-dasharray="1.3 0.7"/></svg>
<div style="left:602px;top:456.8px;width:98px;height:19.2px;background:#1e4ec4;"></div>
<svg style="left:614px;top:461.6px" width="14" height="10" viewBox="0 0 14 10"><path d="M1.2 0.6 H13 L9.6 7.4 H1.2 Z" fill="#14a56f"/><path d="M1.2 7.4 L2.8 9 V7.4 Z" fill="#0c5c3f"/><path d="M4.4 2 C5.4 2 5.9 3 5.2 3.8 M4.4 2 V5.4 M3.4 3.8 C3.2 4.8 4 5.6 5 5.2" fill="none" stroke="#fff" stroke-width="0.45"/></svg>
<svg id="labels" style="left:0;top:0" width="700" height="476" viewBox="0 0 700 476">
<text x="49.1" y="42.0" font-size="4.7" fill="#4a4a4a" text-anchor="start" stroke="#4a4a4a" stroke-width="0.12">10</text>
<text x="110.47" y="42.0" font-size="4.7" fill="#4a4a4a" text-anchor="start" stroke="#4a4a4a" stroke-width="0.12">11</text>
<text x="171.84" y="42.0" font-size="4.7" fill="#4a4a4a" text-anchor="start" stroke="#4a4a4a" stroke-width="0.12">12</text>
<text x="233.21" y="42.0" font-size="4.7" fill="#4a4a4a" text-anchor="start" stroke="#4a4a4a" stroke-width="0.12">13</text>
<text x="294.58" y="42.0" font-size="4.7" fill="#4a4a4a" text-anchor="start" stroke="#4a4a4a" stroke-width="0.12">14</text>
<text x="355.94999999999993" y="42.0" font-size="4.7" fill="#4a4a4a" text-anchor="start" stroke="#4a4a4a" stroke-width="0.12">15</text>
<text x="417.31999999999994" y="42.0" font-size="4.7" fill="#4a4a4a" text-anchor="start" stroke="#4a4a4a" stroke-width="0.12">16</text>
<text x="478.68999999999994" y="42.0" font-size="4.7" fill="#4a4a4a" text-anchor="start" stroke="#4a4a4a" stroke-width="0.12">17</text>
<text x="540.06" y="42.0" font-size="4.7" fill="#4a4a4a" text-anchor="start" stroke="#4a4a4a" stroke-width="0.12">18</text>
<text transform="translate(29.3,96.9) rotate(90)" x="0" y="1.58" font-size="4.4" fill="#4a4a4a" text-anchor="middle" stroke="#4a4a4a" stroke-width="0.12">6</text>
<text transform="translate(29.3,158.3) rotate(90)" x="0" y="1.58" font-size="4.4" fill="#4a4a4a" text-anchor="middle" stroke="#4a4a4a" stroke-width="0.12">7</text>
<text transform="translate(29.3,219.6) rotate(90)" x="0" y="1.58" font-size="4.4" fill="#4a4a4a" text-anchor="middle" stroke="#4a4a4a" stroke-width="0.12">8</text>
<text transform="translate(29.3,281.0) rotate(90)" x="0" y="1.58" font-size="4.4" fill="#4a4a4a" text-anchor="middle" stroke="#4a4a4a" stroke-width="0.12">9</text>
<text transform="translate(29.3,342.4) rotate(90)" x="0" y="1.58" font-size="4.4" fill="#4a4a4a" text-anchor="middle" stroke="#4a4a4a" stroke-width="0.12">10</text>
<text transform="translate(29.3,403.8) rotate(90)" x="0" y="1.58" font-size="4.4" fill="#4a4a4a" text-anchor="middle" stroke="#4a4a4a" stroke-width="0.12">11</text>
<text transform="translate(29.3,465.1) rotate(90)" x="0" y="1.58" font-size="4.4" fill="#4a4a4a" text-anchor="middle" stroke="#4a4a4a" stroke-width="0.12">12</text>
<text x="26.2" y="11.5" font-size="6" fill="#fff" text-anchor="start" stroke="#fff" stroke-width="0.12">Canvas</text>
<text x="297.2" y="11.5" font-size="6.2" fill="#fff" text-anchor="middle" stroke="#fff" stroke-width="0.12">Print Then Cut Labels*</text>
<text x="551.3" y="11.0" font-size="4.6" fill="#fff" text-anchor="start" stroke="#fff" stroke-width="0.12">My Projects</text>
<text x="583.3" y="11.0" font-size="4.6" fill="#fff" text-anchor="start" stroke="#fff" stroke-width="0.12">Save</text>
<text x="613" y="11.0" font-size="4.6" fill="#fff" text-anchor="start" stroke="#fff" stroke-width="0.12">Maker 3</text>
<text x="670.9" y="11.0" font-size="4.7" fill="#fff" text-anchor="middle" stroke="#fff" stroke-width="0.28">Make It</text>
<text x="66.3" y="24.5" font-size="4" fill="#cfcfcf" text-anchor="start" stroke="#cfcfcf" stroke-width="0.12">Operation</text>
<text x="68.6" y="32.0" font-size="3.9" fill="#cfcfcf" text-anchor="start" stroke="#cfcfcf" stroke-width="0.12">Basic Cut</text>
<text x="94.3" y="32.0" font-size="3.6" fill="#bdbdbd" text-anchor="middle" stroke="#bdbdbd" stroke-width="0.12">&#9662;</text>
<text x="126" y="24.5" font-size="4" fill="#3a3a3a" text-anchor="middle" stroke="#3a3a3a" stroke-width="0.12">Select All</text>
<text x="144.5" y="24.5" font-size="4" fill="#3a3a3a" text-anchor="middle" stroke="#3a3a3a" stroke-width="0.12">Edit</text>
<text x="148.9" y="32.0" font-size="3.6" fill="#333" text-anchor="middle" stroke="#333" stroke-width="0.12">&#9662;</text>
<text x="160.2" y="24.5" font-size="4" fill="#cfcfcf" text-anchor="middle" stroke="#cfcfcf" stroke-width="0.12">Offset</text>
<text x="164.3" y="32.0" font-size="3.6" fill="#cfcfcf" text-anchor="middle" stroke="#cfcfcf" stroke-width="0.12">&#9662;</text>
<text x="182" y="24.5" font-size="4" fill="#cfcfcf" text-anchor="middle" stroke="#cfcfcf" stroke-width="0.12">Align</text>
<text x="186" y="32.0" font-size="3.6" fill="#cfcfcf" text-anchor="middle" stroke="#cfcfcf" stroke-width="0.12">&#9662;</text>
<text x="199.3" y="24.5" font-size="4" fill="#cfcfcf" text-anchor="middle" stroke="#cfcfcf" stroke-width="0.12">Arrange</text>
<text x="203.6" y="32.0" font-size="3.6" fill="#cfcfcf" text-anchor="middle" stroke="#cfcfcf" stroke-width="0.12">&#9662;</text>
<text x="216.9" y="24.5" font-size="4" fill="#cfcfcf" text-anchor="middle" stroke="#cfcfcf" stroke-width="0.12">Flip</text>
<text x="221.1" y="32.0" font-size="3.6" fill="#cfcfcf" text-anchor="middle" stroke="#cfcfcf" stroke-width="0.12">&#9662;</text>
<text x="233.6" y="24.5" font-size="4" fill="#cfcfcf" text-anchor="start" stroke="#cfcfcf" stroke-width="0.12">Size</text>
<text x="233.8" y="32.0" font-size="3.6" fill="#cfcfcf" text-anchor="start" stroke="#cfcfcf" stroke-width="0.12">W</text>
<text x="241.2" y="32.0" font-size="3.6" fill="#e4e4e4" text-anchor="start" stroke="#e4e4e4" stroke-width="0.12">0</text>
<text x="265.6" y="32.0" font-size="3.6" fill="#cfcfcf" text-anchor="start" stroke="#cfcfcf" stroke-width="0.12">H</text>
<text x="272.90000000000003" y="32.0" font-size="3.6" fill="#e4e4e4" text-anchor="start" stroke="#e4e4e4" stroke-width="0.12">0</text>
<text x="303.1" y="24.5" font-size="4" fill="#cfcfcf" text-anchor="start" stroke="#cfcfcf" stroke-width="0.12">Rotate</text>
<text x="314.70000000000005" y="32.0" font-size="3.6" fill="#e4e4e4" text-anchor="start" stroke="#e4e4e4" stroke-width="0.12">0</text>
<text x="345" y="24.5" font-size="4" fill="#cfcfcf" text-anchor="start" stroke="#cfcfcf" stroke-width="0.12">Position</text>
<text x="345.2" y="32.0" font-size="3.6" fill="#cfcfcf" text-anchor="start" stroke="#cfcfcf" stroke-width="0.12">X</text>
<text x="351.5" y="32.0" font-size="3.6" fill="#e4e4e4" text-anchor="start" stroke="#e4e4e4" stroke-width="0.12">0</text>
<text x="374.6" y="32.0" font-size="3.6" fill="#cfcfcf" text-anchor="start" stroke="#cfcfcf" stroke-width="0.12">Y</text>
<text x="381.20000000000005" y="32.0" font-size="3.6" fill="#e4e4e4" text-anchor="start" stroke="#e4e4e4" stroke-width="0.12">0</text>
<text x="13" y="37.5" font-size="4.0" fill="#3a3a3a" text-anchor="middle" stroke="#3a3a3a" stroke-width="0.12">New</text>
<text x="13" y="63.5" font-size="4.0" fill="#3a3a3a" text-anchor="middle" stroke="#3a3a3a" stroke-width="0.12">Templates</text>
<text x="13" y="89.5" font-size="4.0" fill="#3a3a3a" text-anchor="middle" stroke="#3a3a3a" stroke-width="0.12">Projects</text>
<text x="13" y="116.0" font-size="4.0" fill="#3a3a3a" text-anchor="middle" stroke="#3a3a3a" stroke-width="0.12">Shapes</text>
<text x="13" y="142.0" font-size="4.0" fill="#3a3a3a" text-anchor="middle" stroke="#3a3a3a" stroke-width="0.12">Images</text>
<text x="13" y="168.5" font-size="4.0" fill="#3a3a3a" text-anchor="middle" stroke="#3a3a3a" stroke-width="0.12">Text</text>
<text x="13" y="194.0" font-size="4.0" fill="#3a3a3a" text-anchor="middle" stroke="#3a3a3a" stroke-width="0.12">Phrases</text>
<text x="13" y="220.5" font-size="4.0" fill="#3a3a3a" text-anchor="middle" stroke="#3a3a3a" stroke-width="0.12">Upload</text>
<text x="60.9" y="463.5" font-size="7.7" fill="#c0c0c0" text-anchor="middle" stroke="#c0c0c0" stroke-width="0.12">250%</text>
<text x="626.5" y="23.5" font-size="4.3" fill="#3a3a3a" text-anchor="middle" stroke="#3a3a3a" stroke-width="0.12">Layers</text>
<text x="674.8" y="23.5" font-size="4.3" fill="#3a3a3a" text-anchor="middle" stroke="#3a3a3a" stroke-width="0.12">Color Sync</text>
<text x="613" y="42.0" font-size="3.9" fill="#b9b9b9" text-anchor="middle" stroke="#b9b9b9" stroke-width="0.12">Group</text>
<text x="637" y="42.0" font-size="3.9" fill="#b9b9b9" text-anchor="middle" stroke="#b9b9b9" stroke-width="0.12">UnGroup</text>
<text x="663.5" y="42.0" font-size="3.9" fill="#b9b9b9" text-anchor="middle" stroke="#b9b9b9" stroke-width="0.12">Duplicate</text>
<text x="688.5" y="42.0" font-size="3.9" fill="#b9b9b9" text-anchor="middle" stroke="#b9b9b9" stroke-width="0.12">Delete</text>
<text x="614.9" y="54.0" font-size="6.2" fill="#333" text-anchor="start" stroke="#333" stroke-width="0.12">Flatten</text>
<text x="627.7" y="66.5" font-size="4.6" fill="#333" text-anchor="start" stroke="#333" stroke-width="0.12">Print Then Cut</text>
<text x="614.9" y="81.5" font-size="6.2" fill="#333" text-anchor="start" stroke="#333" stroke-width="0.12">Flatten</text>
<text x="627.7" y="93.5" font-size="4.6" fill="#333" text-anchor="start" stroke="#333" stroke-width="0.12">Print Then Cut</text>
<text x="614.9" y="109.0" font-size="6.2" fill="#333" text-anchor="start" stroke="#333" stroke-width="0.12">Flatten</text>
<text x="627.7" y="121.0" font-size="4.6" fill="#333" text-anchor="start" stroke="#333" stroke-width="0.12">Print Then Cut</text>
<text x="614.9" y="136.0" font-size="6.2" fill="#333" text-anchor="start" stroke="#333" stroke-width="0.12">Flatten</text>
<text x="627.7" y="148.5" font-size="4.6" fill="#333" text-anchor="start" stroke="#333" stroke-width="0.12">Print Then Cut</text>
<text x="614.9" y="163.5" font-size="6.2" fill="#333" text-anchor="start" stroke="#333" stroke-width="0.12">Group</text>
<text x="614.9" y="175.5" font-size="6.2" fill="#333" text-anchor="start" stroke="#333" stroke-width="0.12">Group</text>
<text x="614.9" y="188.0" font-size="6.2" fill="#333" text-anchor="start" stroke="#333" stroke-width="0.12">Group</text>
<text x="614.9" y="200.0" font-size="6.2" fill="#333" text-anchor="start" stroke="#333" stroke-width="0.12">Attach</text>
<text x="629.3" y="429.0" font-size="3.8" fill="#333" text-anchor="start" stroke="#333" stroke-width="0.12">Blank Canvas</text>
<text x="610.8" y="452.5" font-size="3.9" fill="#b9b9b9" text-anchor="middle" stroke="#b9b9b9" stroke-width="0.12">Slice</text>
<text x="628" y="452.5" font-size="3.9" fill="#b9b9b9" text-anchor="middle" stroke="#b9b9b9" stroke-width="0.12">Weld</text>
<text x="646.4" y="452.5" font-size="3.9" fill="#b9b9b9" text-anchor="middle" stroke="#b9b9b9" stroke-width="0.12">Attach</text>
<text x="666.4" y="452.5" font-size="3.9" fill="#b9b9b9" text-anchor="middle" stroke="#b9b9b9" stroke-width="0.12">Flatten</text>
<text x="687.6" y="452.5" font-size="3.9" fill="#b9b9b9" text-anchor="middle" stroke="#b9b9b9" stroke-width="0.12">Contour</text>
<text x="630.4" y="468.5" font-size="5.55" fill="#fff" text-anchor="start" stroke="#fff" stroke-width="0.12">Try Cricut Access for free</text>
</svg>
<svg style="left:120px;top:145px" width="144" height="66.04" viewBox="0 0 700 321" fill="none" stroke="#0d0d0d" stroke-width="8.6" stroke-linejoin="round" stroke-linecap="round">
<path fill="#fff" d="M62 48 C100 70 150 96 196 95 C240 94 282 48 318 30 L328 31 L468 156 L590 175 L652 197 Q660 201 660 213 L660 240 L62 240 C46 170 44 110 51 62 Q53 48 62 48 Z"/>
<path fill="#fff" d="M268 240 L660 240 L660 283 L310 283 Z"/>
<path fill="#fff" d="M62 240 H197 V283 H62 Z"/>
<path d="M60 60 C120 92 182 160 191 240"/>
<path d="M290 231 C330 200 400 192 470 187"/>
<path d="M455 148 C466 160 471 175 471 188"/>
<path d="M362 60 L337 83 M385 83 L360 106 M408 106 L383 129 M430 127 L406 150"/>
</svg>
<svg style="left:380px;top:120px" width="80" height="110" viewBox="0 0 346 476" fill="none" stroke="#0d0d0d" stroke-width="7.2" stroke-linejoin="round" stroke-linecap="round">
<path fill="#fff" d="M70 37 H178 V245 L287 378 C299 401 289 440 255 455 C236 461 216 455 205 445 L62 292 C44 268 48 235 70 212 Z"/>
<path d="M70 72 H178"/>
<path d="M70 212 C112 226 138 282 98 323"/>
<path d="M285 381 L207 447"/>
</svg>
<svg style="left:140px;top:280px" width="110" height="100" viewBox="0 0 524 476" fill="none" stroke="#0d0d0d" stroke-width="8.6" stroke-linejoin="miter" stroke-linecap="round">
<path fill="#fff" d="M180 35 C195 104 305 104 320 35 L410 80 L455 200 L378 228 L372 450 H128 L122 228 L48 200 L92 80 Z"/>
<path d="M122 228 L131 140 M378 228 L369 140" stroke-width="6"/>
</svg>
<svg style="left:375px;top:280px" width="90" height="100" viewBox="0 0 428 476" fill="none" stroke="#0d0d0d" stroke-width="8.6" stroke-linejoin="miter" stroke-linecap="round">
<path fill="#fff" d="M78 42 H345 L382 440 H238 L211 232 L185 440 H40 Z"/>
<path d="M76 68 H347"/>
<path d="M128 68 C125 115 100 140 70 140 M295 68 C298 115 323 140 353 140" stroke-width="5.5"/>
</svg>

</div></div>
</body>
</html>
